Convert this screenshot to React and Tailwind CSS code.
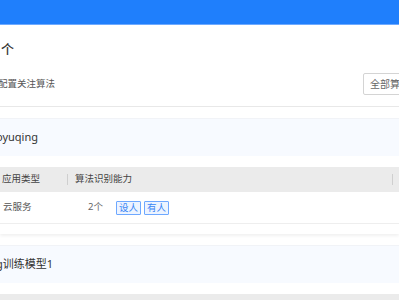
const font = "font-['Noto_Sans','Noto_Sans_CJK_SC',sans-serif]";

const sections = [
  {
    name: "yuqing",
    prefix: "o",
    rows: [{ type: "云服务", count: "2个", tags: ["设人", "有人"] }],
  },
  { name: "训练模型1", prefix: "g", rows: [] },
];

function Tag({ label }) {
  return (
    <span className="flex h-[14px] items-center rounded-[1px] border border-[#6ea8ff] bg-[#edf4ff] px-[2px] text-[9.5px] leading-none text-[#3a86f5]">
      {label}
    </span>
  );
}

function Section({ item }) {
  return (
    <div className="bg-white pb-[10px] shadow-[0_2px_3px_rgba(0,0,0,0.06)]">
      <div className="mt-[11px] flex h-[38px] items-center border-t border-[#f1f3f7] bg-[#f7faff] text-[11px] text-[#333]">
        <span className="-ml-[4px]">
          {item.prefix}
          {item.name}
        </span>
      </div>
      <div className="mt-[11px] flex h-[25px] items-center bg-[#ebebeb] text-[9.5px] text-[#444]">
        <div className="flex w-[67px] items-center pl-[2px]">应用类型</div>
        <div className="h-[11px] w-px bg-[#cfcfcf]" />
        <div className="flex w-[324px] items-center pl-[7px]">算法识别能力</div>
        <div className="h-[11px] w-px bg-[#cfcfcf]" />
      </div>
      {item.rows.map((row) => (
        <div
          key={row.type}
          className="flex h-[32px] items-center border-b border-[#eeeeee] text-[9.5px] text-[#555]"
        >
          <div className="w-[68px] pl-[3px]">{row.type}</div>
          <div className="flex items-center pl-[20px]">
            <span className="text-[#666]">{row.count}</span>
            <div className="ml-[13px] flex gap-[3px]">
              {row.tags.map((t) => (
                <Tag key={t} label={t} />
              ))}
            </div>
          </div>
        </div>
      ))}
    </div>
  );
}

export default function App() {
  return (
    <div className={`h-[300px] w-full overflow-hidden bg-white ${font}`}>
      <div className="h-[25px] border-b border-[#6eaaff] bg-[#1f7ffc]" />
      <div className="h-[82px] border-b border-[#e8e8e8]">
        <div className="pl-[1px] pt-[16px] text-[13px] font-medium leading-[16px] text-[#333]">
          个
        </div>
        <div className="mt-[16px] flex h-[22px] items-center justify-between">
          <span className="-ml-[2px] text-[9.5px] text-[#555]">配置关注算法</span>
          <div className="-mr-[44px] flex h-[22px] w-[80px] items-center rounded-[2px] border border-[#d4d4d4] pl-[6px] text-[10px] text-[#666]">
            全部算法
          </div>
        </div>
      </div>
      {sections.map((s) => (
        <Section key={s.name} item={s} />
      ))}
    </div>
  );
}
